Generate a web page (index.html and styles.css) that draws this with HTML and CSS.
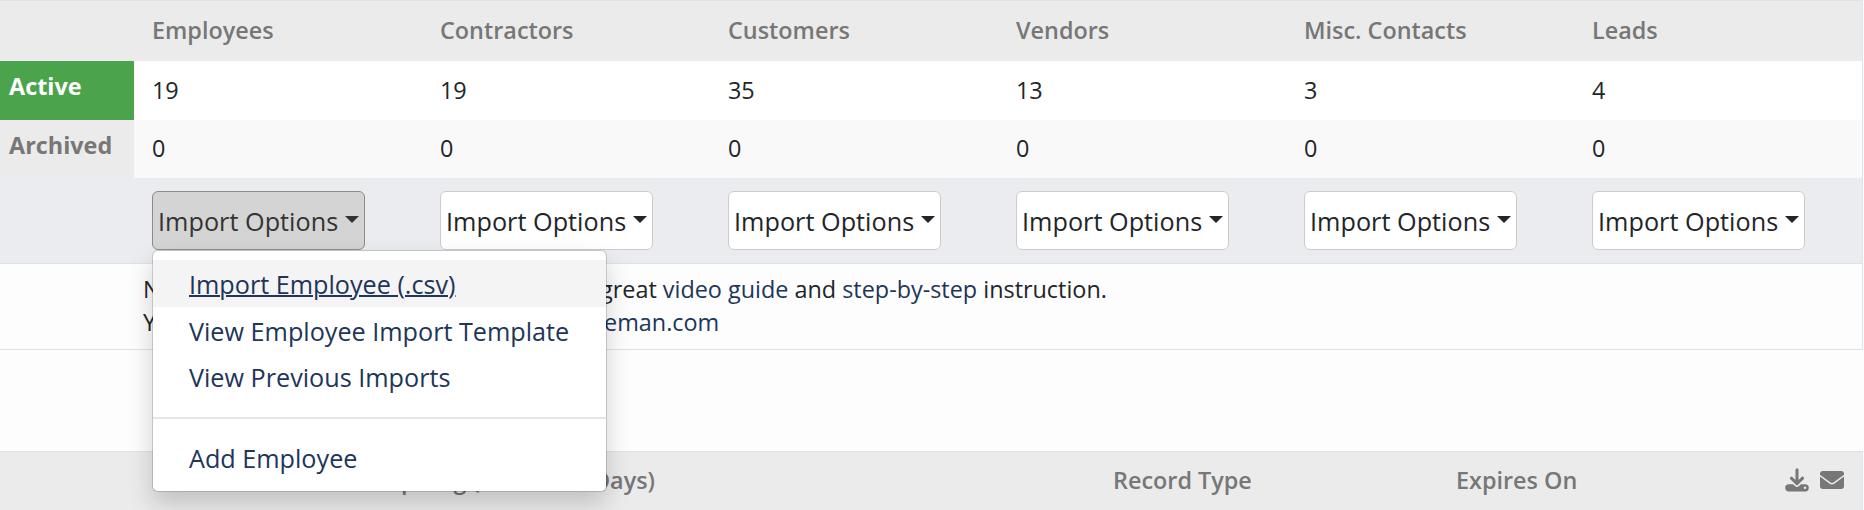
FILE: index.html
```html
<!DOCTYPE html>
<html lang="en">
<head>
<meta charset="utf-8">
<title>Contacts</title>
<link rel="stylesheet" href="styles.css">
</head>
<body>
<main class="page">
  <section class="summary">
    <div class="row head"><div class="label"></div><div>Employees</div><div>Contractors</div><div>Customers</div><div>Vendors</div><div>Misc. Contacts</div><div>Leads</div></div>
    <div class="row active"><div class="label">Active</div><div>19</div><div>19</div><div>35</div><div>13</div><div>3</div><div>4</div></div>
    <div class="row archived"><div class="label">Archived</div><div>0</div><div>0</div><div>0</div><div>0</div><div>0</div><div>0</div></div>
    <div class="row options">
      <div class="label"></div>
      <div class="dropdown">
        <button class="btn open">Import Options<i class="caret"></i></button>
        <div class="menu">
          <a class="item hover">Import Employee (.csv)</a>
          <a class="item">View Employee Import Template</a>
          <a class="item">View Previous Imports</a>
          <div class="divider"></div>
          <a class="item">Add Employee</a>
        </div>
      </div>
      <div><button class="btn">Import Options<i class="caret"></i></button></div>
      <div><button class="btn">Import Options<i class="caret"></i></button></div>
      <div><button class="btn">Import Options<i class="caret"></i></button></div>
      <div><button class="btn">Import Options<i class="caret"></i></button></div>
      <div><button class="btn">Import Options<i class="caret"></i></button></div>
    </div>
    <div class="help">
      <p><span class="lead">Need help importing? Check out our</span><span>great <a>video guide</a> and <a>step-by-step</a> instruction.</span></p>
      <p><span class="lead mail">You can also email <a>support@servic</a></span><a>eman.com</a></p>
    </div>
  </section>
  <section class="expiring">
    <div class="title">Expiring (Within 30 Days)</div>
    <div class="type">Record Type</div>
    <div class="date">Expires On</div>
    <div class="tools">
      <svg width="24" height="24" viewBox="0 0 24 24"><path d="M3.8 16.2H8l2.2 2a2.8 2.8 0 0 0 3.600 0l2.200-2h4.200a3.600 3.600 0 0 1 0 7.200H3.800a3.600 3.600 0 0 1 0-7.200Z" fill="currentColor"/><circle cx="20" cy="19.800" r="1.200" fill="#ebebeb"/><path d="M12 1.800v13.500M6.400 10.200l5.600 5.400 5.600-5.400" fill="none" stroke="#ebebeb" stroke-width="5"/><path d="M12 1.800v13.500M6.400 10.200l5.600 5.400 5.600-5.400" fill="none" stroke="currentColor" stroke-width="3" stroke-linecap="round" stroke-linejoin="round"/></svg>
      <svg width="24" height="24" viewBox="0 0 24 24"><rect y="3" width="24" height="18" rx="3" fill="currentColor"/><path d="M-.5 7.200l10.300 7.700a3.600 3.600 0 0 0 4.400 0L24.500 7.200" fill="none" stroke="#ebebeb" stroke-width="1.500"/></svg>
    </div>
  </section>
</main>
</body>
</html>
```
FILE: styles.css
```css
* { box-sizing: border-box; }
body { margin: 0; background: #fdfdfd; color: #212529; font: 23.4px/36px "Open Sans", sans-serif; overflow: hidden; }
.page { width: 1863px; height: 510px; }
.summary { height: 350px; border: solid #dee2e6; border-width: 1px 1px 1px 0; }
.row { display: grid; grid-template-columns: 134px repeat(6, 288px); }
.row > div { padding-left: 18px; }
.row > .label { padding-left: 9px; font-weight: 700; }
.head { height: 60px; background: #ebebeb; color: #777; font-weight: 600; line-height: 58px; }
.active { height: 59px; background: #fff; line-height: 58px; }
.active .label { background: #4ba44c; color: #fff; line-height: 50px; }
.archived { height: 58px; background: #f9f9f9; line-height: 56px; }
.archived .label { background: #ebebeb; color: #777; line-height: 50px; }
.options { height: 85px; padding-top: 13px; background: #ebecf0; }
.btn { display: flex; align-items: center; width: 213px; height: 59px; padding: 0 5px; border: 1px solid #ccc; border-radius: 6px; background: #fff; color: #212529; font: 25.2px/36px "Open Sans", sans-serif; letter-spacing: .04px; white-space: nowrap; }
.btn.open { background: #d4d4d4; border-color: #8c8c8c; color: #333; }
.caret { margin: -2px 0 0 7px; border: 7px solid transparent; border-top-color: currentColor; border-bottom: 0; }
.dropdown { position: relative; }
.menu { position: absolute; z-index: 2; top: 59px; left: 18px; width: 455px; height: 242px; padding: 9px 0; border: 1px solid rgba(0,0,0,.15); border-radius: 6px; background: #fff; background-clip: padding-box; box-shadow: 0 12px 24px rgba(0,0,0,.175); }
.item { display: block; height: 46.500px; padding-left: 36px; color: #213559; font-size: 25.2px; line-height: 48px; white-space: nowrap; }
.item.hover { background: #f4f4f4; text-decoration: underline; text-decoration-thickness: 2px; }
.divider { height: 2px; margin: 17px 0 15px; background: #e5e5e5; }
.help { height: 86px; padding: 9px 0 0 143px; border-top: 1px solid #dee2e6; line-height: 33px; }
.help p { display: flex; margin: 0; white-space: nowrap; }
.help a { color: #213559; }
.lead { flex: none; width: 457px; overflow: hidden; }
.lead.mail { width: 461px; }
.expiring { display: grid; grid-template-columns: 655px 458px 343px 406px; height: 60px; margin-top: 101px; border-top: 1px solid #dee2e6; border-right: 1px solid #dee2e6; background: #ebebeb; color: #777; font-weight: 600; line-height: 57px; }
.title { text-align: right; }
.type { padding-left: 458px; margin-right: -343px; white-space: nowrap; }
.date { padding-left: 343px; white-space: nowrap; }
.tools { display: flex; gap: 11px; justify-content: flex-end; padding: 16px 18px 0 0; }
```
